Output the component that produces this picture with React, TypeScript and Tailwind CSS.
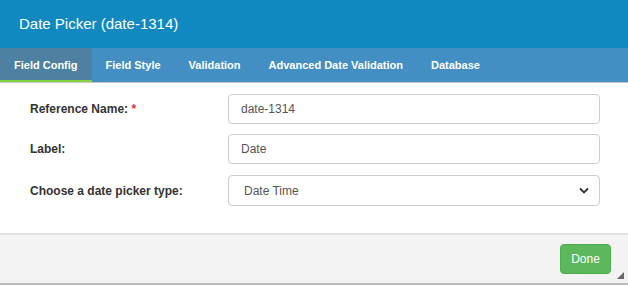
export default function App() {
  const tabs = ["Field Config", "Field Style", "Validation", "Advanced Date Validation", "Database"];
  return (
    <div className="w-[628px] h-[285px] bg-white flex flex-col overflow-hidden font-['Liberation_Sans',Arial,sans-serif] text-[#333]">
      <header className="h-[48px] shrink-0 bg-[#1189c0] flex items-center px-[19px]">
        <h1 className="text-[15px] text-white leading-none pb-[1px]">Date Picker (date-1314)</h1>
      </header>
      <nav className="h-[35px] shrink-0 bg-[#438fc4] border-b border-[#c8c8c8] flex items-stretch">
        {tabs.map((t, i) => (
          <div
            key={t}
            className={
              i === 0
                ? "px-[14px] flex items-center text-[11px] font-bold text-white bg-[#4e80a1] rounded-t-[3px] border-b-2 border-[#86d33f] pt-[2px]"
                : "px-[14px] flex items-center text-[11px] font-bold text-white"
            }
          >
            {t}
          </div>
        ))}
      </nav>
      <main className="flex-1 flex flex-col pt-[11px] pl-[30px] pr-[28px]">
        <div className="flex items-center h-[30px]">
          <label className="w-[198px] text-[12px] font-bold">
            Reference Name: <span className="text-[#e3342f]">*</span>
          </label>
          <div className="flex-1 h-full border border-[#ccc] rounded-[4px] flex items-center px-[12px] text-[12px] text-[#555]">
            date-1314
          </div>
        </div>
        <div className="flex items-center h-[30px] mt-[10px]">
          <label className="w-[198px] text-[12px] font-bold">Label:</label>
          <div className="flex-1 h-full border border-[#ccc] rounded-[4px] flex items-center px-[12px] text-[12px] text-[#555]">
            Date
          </div>
        </div>
        <div className="flex items-center h-[31px] mt-[11px]">
          <label className="w-[198px] text-[12px] font-bold">Choose a date picker type:</label>
          <div className="flex-1 h-full border border-[#ccc] rounded-[4px] flex items-center justify-between pl-[15px] pr-[10px] text-[12px] text-[#555]">
            <span>Date Time</span>
            <svg width="10" height="7" viewBox="0 0 10 7">
              <path d="M1 1.5 L5 5.5 L9 1.5" fill="none" stroke="#333" strokeWidth="1.8" />
            </svg>
          </div>
        </div>
      </main>
      <footer className="h-[52px] shrink-0 bg-[#f3f3f3] border-t-2 border-[#e2e2e2] border-b-2 border-b-[#bbb] relative flex items-center justify-end pr-[17px]">
        <button className="h-[30px] w-[51px] bg-[#5cb85c] border border-[#4cae4c] rounded-[4px] text-white text-[12px]">
          Done
        </button>
        <svg className="absolute right-[4px] bottom-[4px]" width="7" height="7" viewBox="0 0 7 7">
          <path d="M7 0 L7 7 L0 7 Z" fill="#666" />
        </svg>
      </footer>
    </div>
  );
}
